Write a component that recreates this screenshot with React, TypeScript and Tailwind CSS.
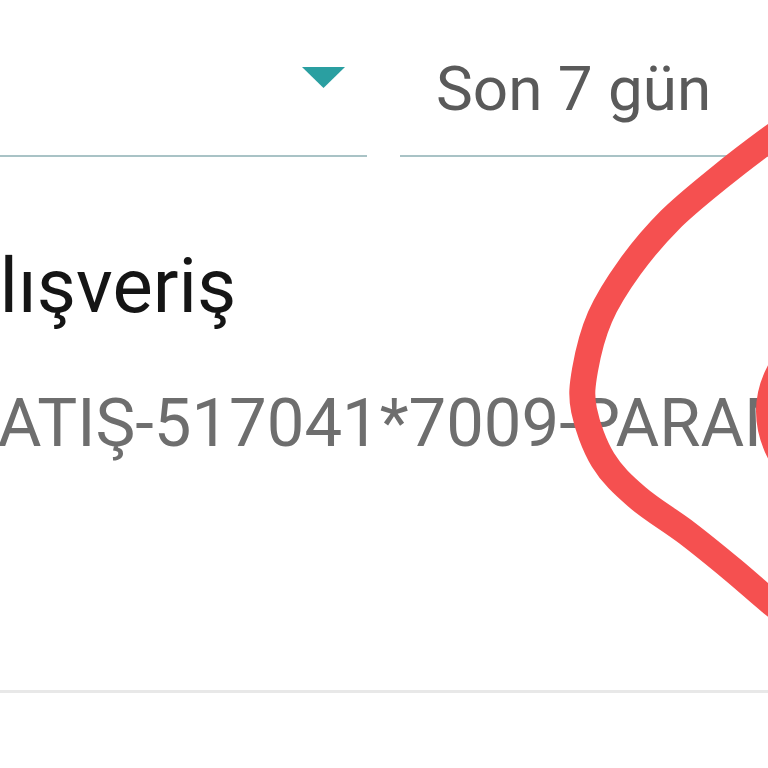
import React from 'react';

const font = { fontFamily: 'Roboto, "Noto Sans", sans-serif' };

function Caret() {
  return (
    <svg width="43" height="21" viewBox="0 0 43 21">
      <path d="M0 0 H43 L21.5 21 Z" fill="#2a9fa1" />
    </svg>
  );
}

// red hand-drawn loop over the screenshot
const loop =
  'M800 118 C794.7 121.7 781.3 130.2 768 140 C754.7 149.8 736.3 163.7 720 177 C703.7 190.3 685 205 670 220 ' +
  'C655 235 641.7 250.8 630 267 C618.3 283.2 607.5 299.8 600 317 C592.5 334.2 587.7 354.5 585 370 ' +
  'C582.3 385.5 581 395 584 410 C587 425 594.2 445.5 603 460 C611.8 474.5 623 484.8 637 497 ' +
  'C651 509.2 671 520.8 687 533 C703 545.2 719.5 558.8 733 570 C746.5 581.2 756.8 590.8 768 600 ' +
  'C779.2 609.2 794.7 620.8 800 625';

export default function App() {
  return (
    <div className="relative w-[768px] h-[768px] overflow-hidden bg-white" style={font}>
      {/* filter row */}
      <div className="flex gap-[33px]">
        <div className="w-[367px] h-[157px] shrink-0 border-b-2 border-[#a9c3c6] flex justify-end items-start pt-[67px] pr-[22px]">
          <Caret />
        </div>
        <div className="w-[420px] h-[157px] shrink-0 border-b-2 border-[#a9c3c6] pt-[58px] pl-[36px]">
          <span className="block text-[62px] leading-none text-[#5a5a5a] whitespace-nowrap">Son 7 gün</span>
        </div>
      </div>

      {/* transaction row */}
      <div className="h-[536px] border-b-[3px] border-[#e8e8e8] pt-[91px]">
        <div className="ml-[-50px] text-[76px] leading-none text-[#151515] whitespace-nowrap">Alışveriş</div>
        <div className="mt-[66px] ml-[-42px] text-[67px] leading-none text-[#6e6e6e] whitespace-nowrap">
          SATIŞ-517041*7009-PARAMETRE
        </div>
      </div>

      <svg className="absolute inset-0 pointer-events-none" width="768" height="768" viewBox="0 0 768 768">
        <path d={loop} fill="none" stroke="#f55050" strokeWidth="26" strokeLinecap="round" strokeLinejoin="round" />
        <path d="M790 355 Q748 410 790 470" fill="none" stroke="#f55050" strokeWidth="26" strokeLinecap="round" />
      </svg>
    </div>
  );
}
